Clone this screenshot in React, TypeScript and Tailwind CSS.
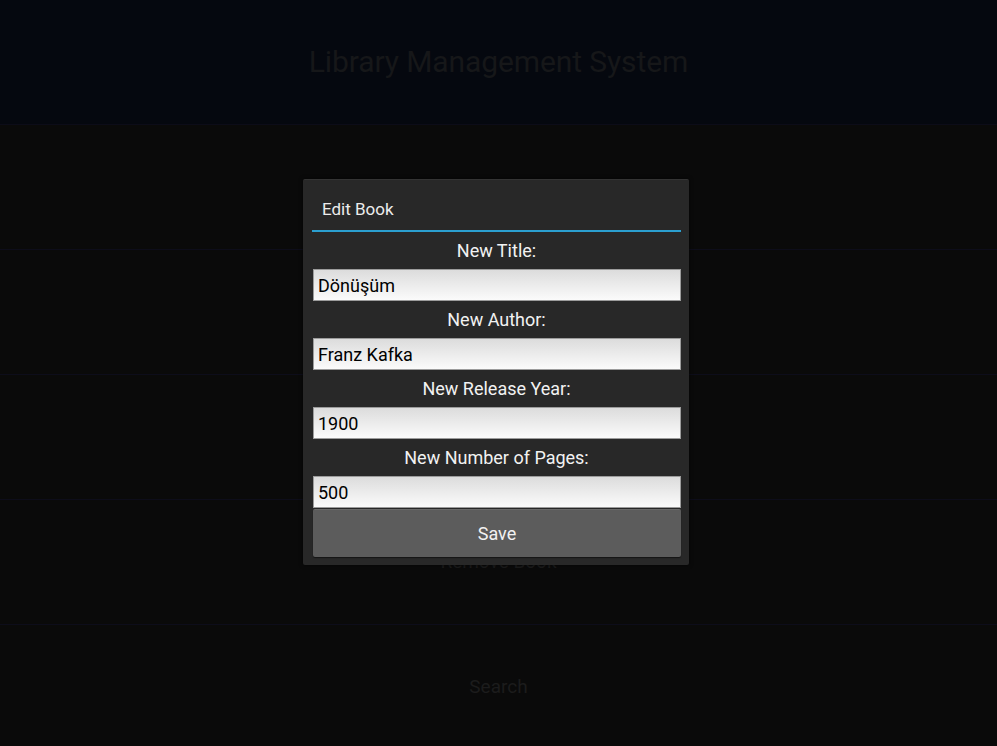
import { useState } from 'react';

const ROWS = ['Add Book', 'Edit Book', 'List Books', 'Remove Book', 'Search'];

const FIELDS: { label: string; value: string }[] = [
  { label: 'New Title:', value: 'Dönüşüm' },
  { label: 'New Author:', value: 'Franz Kafka' },
  { label: 'New Release Year:', value: '1900' },
  { label: 'New Number of Pages:', value: '500' },
];

export default function App() {
  const [values, setValues] = useState(FIELDS.map((f) => f.value));

  return (
    <div className="relative h-[746px] w-full overflow-hidden bg-[#0a0a0a] font-['Roboto',sans-serif]">
      {/* Dimmed main screen */}
      <header className="flex h-[125px] items-center justify-center border-b border-[#0c0c18] bg-[#05080f]">
        <h1 className="pb-[2px] text-[30px] font-normal tracking-[-0.1px] text-[#161719]">
          Library Management System
        </h1>
      </header>
      {ROWS.map((r) => (
        <div
          key={r}
          className="flex h-[125px] items-center justify-center border-b border-[#0d0d1a] text-[19px] text-[#1c1c1c]"
        >
          {r}
        </div>
      ))}

      {/* Edit dialog */}
      <div className="absolute left-[303px] top-[179px] w-[386px] rounded-[2px] border-t border-[#343434] bg-[#282828] pb-[8px] pl-[9px] pr-[8px] shadow-[0_0_4px_rgba(0,0,0,0.6)]">
        <div className="flex h-[50px] items-center pl-[10px] pt-[9px] text-[17px] text-[#ececec]">Edit Book</div>
        <div className="h-[2px] bg-[#2b9fd0]" />
        {FIELDS.map((f, i) => (
          <div key={f.label}>
            <div className="flex h-[37px] items-center justify-center text-[18px] text-[#f2f2f2]">
              {f.label}
            </div>
            <input
              value={values[i]}
              onChange={(e) => setValues((v) => v.map((x, j) => (j === i ? e.target.value : x)))}
              className="ml-[1px] block h-[32px] w-[368px] border border-[#9c9c9c] bg-gradient-to-b from-[#dcdcdc] to-[#fbfbfb] px-[4px] text-[18px] text-black outline-none"
            />
          </div>
        ))}
        <button className="ml-[1px] mt-[1px] block h-[48px] w-[368px] rounded-[2px] border-t border-[#6a6a6a] bg-[#5c5c5c] text-[18px] text-[#f2f2f2] shadow-[0_1px_1px_rgba(0,0,0,0.5)]">
          Save
        </button>
      </div>
    </div>
  );
}
